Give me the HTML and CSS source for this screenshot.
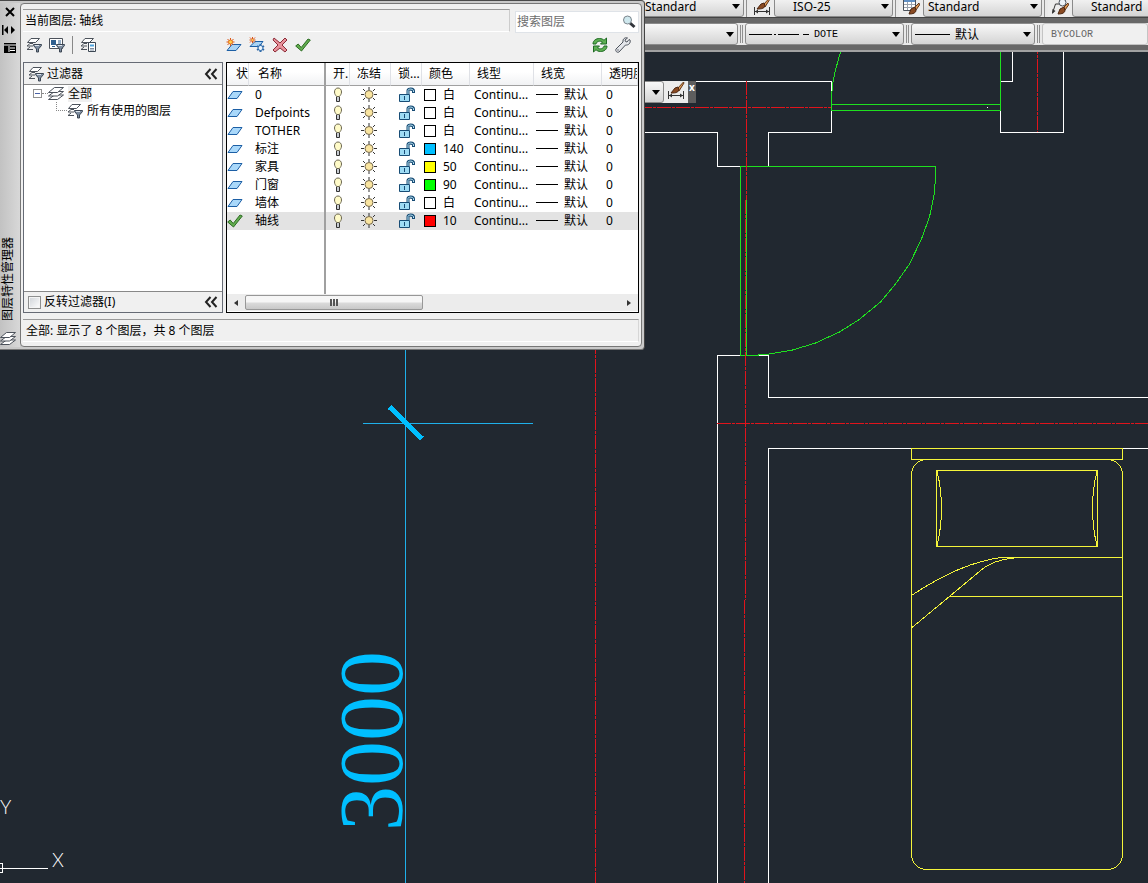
FILE: index.html
```html
<!DOCTYPE html>
<html lang="zh-CN">
<head>
    <meta charset="UTF-8">
    <meta name="viewport" content="width=device-width, initial-scale=1.0">
    <title>图层特性管理器</title>
    <link rel="stylesheet" href="styles.css">
</head>
<body>
    <!-- Icon sprites -->
    <svg class="sprites" aria-hidden="true">
        <symbol id="i-layers" viewBox="0 0 16 16">
            <g fill="#fff" stroke="#4c525b">
                <path d="M.5 13.500h9l6-4.500h-9z"/>
                <path d="M.5 10h9l6-4.500h-9z"/>
                <path d="M.5 6.500h9l6-5h-9z"/>
            </g>
        </symbol>
        <symbol id="i-filter" viewBox="0 0 16 16">
            <path d="M5 1.500h8.500l-4 4H1.500zM1 9l3-2.500h3M1 9h6M1 12.500l3-2.500M1 12.500h6" fill="#fff" stroke="#4c525b"/>
            <path d="M7.500 7.500h8v1l-3 3.500v3h-2v-3l-3-3.500z" fill="#7e8da0" stroke="#3c4653"/>
            <path d="M9 8.500h4" stroke="#dfe6ee"/>
        </symbol>
        <symbol id="i-group" viewBox="0 0 16 16">
            <path d="M.5 1.500h13v10H.5z" fill="#fff" stroke="#4c525b"/>
            <path d="M2 3h5v5H2z" fill="#2f5f8f"/>
            <path d="M9 4h3M9 6h3M3 9.500h3" stroke="#2f5f8f"/>
            <path d="M7.500 7.500h8v1l-3 3.500v3h-2v-3l-3-3.500z" fill="#7e8da0" stroke="#3c4653"/>
            <path d="M9 8.500h4" stroke="#dfe6ee"/>
        </symbol>
        <symbol id="i-states" viewBox="0 0 16 16">
            <path d="M5 1.500h8.500l-4 4H1.500zM1 9l3-2.500h3M1 9h6M1 12.500l3-2.500M1 12.500h6" fill="#fff" stroke="#4c525b"/>
            <path d="M8.500 5.500h7v9h-7z" fill="#fff" stroke="#3c4653"/>
            <path d="M10 7.500h4v2h-4z" fill="#4ea3dc"/>
            <path d="M10 11.500h4M10 13h4" stroke="#7e8da0"/>
        </symbol>
        <symbol id="i-new" viewBox="0 0 16 16">
            <path d="M1 13.500h9l5-6H6z" fill="#a9d4f5" stroke="#1c5fa5"/>
            <path d="M4.500 1v8M.5 5h8M1.500 2l6 6M7.500 2l-6 6" stroke="#d9541a"/>
            <circle cx="4.500" cy="5" r="2" fill="#ffd34d" stroke="#e8761e"/>
        </symbol>
        <symbol id="i-newvp" viewBox="0 0 16 16">
            <path d="M1 9.500h9l4-5H6z" fill="#a9d4f5" stroke="#1c5fa5"/>
            <path d="M3.500 0v6M.5 3h6M1 .5l5 5M6 .5l-5 5" stroke="#d9541a"/>
            <circle cx="3.500" cy="3" r="1" fill="#ffd34d"/>
            <path d="M11.500 7v8M8 9l7 4M15 9l-7 4" stroke="#2b68a8" stroke-width="2"/>
            <circle cx="11.500" cy="11" r="2.500" fill="#eaf4fc" stroke="#2b68a8"/>
        </symbol>
        <symbol id="i-delete" viewBox="0 0 16 16">
            <path d="M2 1l6 5 5-5 2 2-5 5 5 5-2 2-5-4-5 4-2-2 5-5-5-5z" fill="#e8929b" stroke="#8c2a36"/>
        </symbol>
        <symbol id="i-check" viewBox="0 0 16 16">
            <path d="M.7 9l2.500-2 3 3.500L13 2l2.300 1L6.500 14z" fill="#62ad4f" stroke="#2d6c23"/>
        </symbol>
        <symbol id="i-refresh" viewBox="0 0 16 16">
            <path d="M1 7C1 3.500 4 1.500 7.500 1.500c2 0 3.500.7 4.500 1.800L14.500 1v6h-6L10.500 5C8 3.300 4.500 4.300 4 7z" fill="#5db052" stroke="#1f6b24"/>
            <path d="M15 9c0 3.500-3 5.500-6.500 5.500-2 0-3.500-.7-4.500-1.800L1.500 15V9h6L5.500 11c2.500 1.700 6 .7 6.500-2z" fill="#5db052" stroke="#1f6b24"/>
        </symbol>
        <symbol id="i-wrench" viewBox="0 0 16 16">
            <path d="M14 2.500L12 5l-1.500-.5L10 3l2.500-2C10 0 7.500 2 8 5L1 12c-1 2 1 4 3 3l6.500-7c3 .5 5.500-2 4.500-5z" fill="#e4e6ea" stroke="#4c525b"/>
            <circle cx="3" cy="13" r=".7" fill="#4c525b"/>
        </symbol>
        <symbol id="i-search" viewBox="0 0 16 16">
            <path d="M9 9l4.500 4" stroke="#30343a" stroke-width="3"/>
            <circle cx="6.500" cy="6" r="4" fill="#cfe8ee" stroke="#7b858c"/>
        </symbol>
        <symbol id="i-layer" viewBox="0 0 16 16">
            <path d="M1 11.500h9l5-7H6z" fill="#a9d8fa" stroke="#1c5fa5"/>
        </symbol>
        <symbol id="i-bulb" viewBox="0 0 16 16">
            <path d="M6.500 9.500C5.500 8 4.500 7 4.500 5c0-2.500 1.500-4 3.500-4s3.500 1.500 3.500 4c0 2-1 3-2 4.500z" fill="#fffbc8" stroke="#6b6650"/>
            <path d="M6.500 10v4.500h3V10" fill="#c8ccd2" stroke="#333"/>
        </symbol>
        <symbol id="i-sun" viewBox="0 0 16 16">
            <path d="M8 0v3M8 12v3M0 7.500h3M13 7.500h3M2 2l2 2M12 11l2 2M14 2l-2 2M4 11l-2 2" stroke="#333"/>
            <circle cx="8" cy="7.500" r="4" fill="#fae5a0" stroke="#75684c"/>
        </symbol>
        <symbol id="i-lock" viewBox="0 0 16 16">
            <path d="M9 7V3.500C9 1.500 14.500 1.500 14.500 4v2" fill="none" stroke="#174c75" stroke-width="3"/>
            <path d="M9 7V3.500C9 1.500 14.500 1.500 14.500 4v1" fill="none" stroke="#bce6f7"/>
            <path d="M.5 7.500h10v7H.5z" fill="#9edcf5" stroke="#174c75"/>
            <path d="M5.500 9v4" stroke="#174c75"/>
        </symbol>
        <symbol id="i-dimstyle" viewBox="0 0 18 18">
            <path d="M1.500 9v8M16.500 9v8M2 13.500h14" stroke="#333"/>
            <path d="M2 13.500l3-2v4zM16 13.500l-3-2v4z" fill="#333"/>
            <path d="M16.500 0L10 7l2 2 5-8z" fill="#e09a55" stroke="#633617"/>
            <path d="M11 5L8 6 4 11c3 0 7 0 8-3z" fill="#8a4a22" stroke="#4b2611"/>
        </symbol>
        <symbol id="i-tablestyle" viewBox="0 0 18 18">
            <path d="M1.500 1.500h12v11h-12z" fill="#fff" stroke="#4c525b"/>
            <path d="M2 3h11" stroke="#5f8fc4" stroke-width="2"/>
            <path d="M2 6.500h11M2 9.500h11M5.500 4v8M9.500 4v8" stroke="#9aa2ad"/>
            <path d="M17 5l-5 5 2 2 3.500-5z" fill="#e09a55" stroke="#633617"/>
            <path d="M13 9l-4 2-2 5c4 0 7-1 7-4z" fill="#8a4a22" stroke="#4b2611"/>
        </symbol>
        <symbol id="i-leaderstyle" viewBox="0 0 18 18">
            <path d="M1.500 15l3-9H9" fill="none" stroke="#333"/>
            <path d="M1 16l.5-5 3 2z" fill="#333"/>
            <circle cx="11.500" cy="4.500" r="3.500" fill="#eef3f8" stroke="#4c525b"/>
            <path d="M17 5l-5 5 2 2 3.500-5z" fill="#e09a55" stroke="#633617"/>
            <path d="M13 9l-4 2-2 5c4 0 7-1 7-4z" fill="#8a4a22" stroke="#4b2611"/>
        </symbol>
        <symbol id="i-chevrons" viewBox="0 0 14 12">
            <path d="M6.500 1L2 6l4.500 5M12.500 1L8 6l4.500 5" fill="none" stroke="#222" stroke-width="2"/>
        </symbol>
    </svg>

    <main class="workspace">
        <!-- Model space -->
        <svg class="drawing" aria-label="模型空间">
            <g class="wall">
                <path d="M600 81.500H831.500V132.500H768.500V166.500H717.500V132.500H600"/>
                <path d="M1000.500 110V132.500H1063.500V40M1000 81.500H1012.500V40"/>
                <path d="M717.500 2000V355.500H768.500V397.500H4000M768.500 2000V448.500H4000"/>
                <path d="M987 107.500h1"/>
            </g>
            <g class="opening">
                <path d="M1000.500 40V110.500M831.500 98V110.500M831 104.500H1000M831 110.500H1000"/>
                <path d="M740.500 355V166.500H935.500V176L934.500 193 929.500 217 921.500 239 909.500 264 895.500 284 880.500 302 858.500 320 839.500 332 815.500 343 792.500 350 769.500 354 753 355.500H740"/>
                <path d="M746.500 200V355"/>
                <path d="M840.500 52L835.500 70 832.500 84 831.500 98"/>
            </g>
            <g class="axis">
                <path d="M600 107.500H831"/>
                <path d="M746.500 81V200M745.500 200V600M744.500 600V2000"/>
                <path d="M1037.500 40V132M595.500 340V2000M717 423.500H4000"/>
            </g>
            <g class="furniture">
                <path d="M911.500 448.500H1122.500V459.500H911.500z"/>
                <rect x="911.500" y="459.500" width="211" height="410" rx="15"/>
                <path d="M936.500 470.500H1097.500V546.500H936.500z"/>
                <path d="M937 471Q946 508 937 546M1097 471Q1088 508 1097 546"/>
                <path d="M911.500 595.500Q960 563 1001 557.500H1122M911.500 628L980 571Q992 560 1014 558M949 596.500H1122"/>
            </g>
            <g class="dimension">
                <path d="M405.500 340V2000M363 423.500H533"/>
                <path class="tick" d="M389.500 407L422 438.500"/>
                <text class="dimension-text" transform="translate(402 831) rotate(-90)">3000</text>
            </g>
            <g class="ucs">
                <path d="M-1 863.500H2.500V872.500H-1M0 868.500H48"/>
                <text x="52" y="867">X</text>
                <text x="0" y="814">Y</text>
            </g>
        </svg>

        <div class="toolbars">
            <div class="toolbar toolbar-styles">
                <span class="combo combo-text"><select aria-label="文字样式"><option>Standard</option></select></span>
                <span class="grip"></span>
                <button class="style-button" aria-label="标注样式"><svg><use href="#i-dimstyle"/></svg></button>
                <span class="combo combo-style combo-indent"><select aria-label="标注样式列表"><option>ISO-25</option></select></span>
                <span class="grip"></span>
                <button class="style-button" aria-label="表格样式"><svg><use href="#i-tablestyle"/></svg></button>
                <span class="combo combo-style"><select aria-label="表格样式列表"><option>Standard</option></select></span>
                <span class="grip"></span>
                <button class="style-button" aria-label="多重引线样式"><svg><use href="#i-leaderstyle"/></svg></button>
                <span class="combo combo-style combo-indent"><select aria-label="多重引线样式列表"><option>Standard</option></select></span>
            </div>
            <div class="toolbar toolbar-properties">
                <span class="combo combo-color"><select aria-label="颜色"><option>ByLayer</option></select></span>
                <span class="grip"></span>
                <span class="combo combo-linetype"><select aria-label="线型"><option>DOTE</option></select></span>
                <span class="grip"></span>
                <span class="combo combo-weight"><select aria-label="线宽"><option>默认</option></select></span>
                <span class="grip"></span>
                <span class="combo combo-plot"><select aria-label="打印样式" disabled><option>BYCOLOR</option></select></span>
            </div>
        </div>

        <div class="mini-toolbar">
            <span class="combo combo-mini"><select aria-label="标注"><option></option></select></span>
            <button class="style-button" aria-label="标注样式"><svg><use href="#i-dimstyle"/></svg></button>
            <button class="mini-close" aria-label="关闭">x</button>
        </div>

        <!-- Layer properties manager -->
        <section class="palette">
            <div class="palette-strip">
                <button aria-label="关闭"><svg viewBox="0 0 16 16"><path d="M4 4l8 8M12 4l-8 8" stroke="#000" stroke-width="2"/></svg></button>
                <button aria-label="自动隐藏"><svg viewBox="0 0 16 16"><path d="M0 3h1.500v10H0zM6 4v8L2 8zM9 4v8l4-4z"/></svg></button>
                <button aria-label="特性"><svg viewBox="0 0 16 16"><path d="M2 3h12v10H2z"/><path d="M2 5h12M8 8h5M8 10.500h5M7 6v6" stroke="#fff"/></svg></button>
                <h1 class="palette-title">图层特性管理器</h1>
                <svg class="icon"><use href="#i-layers"/></svg>
            </div>

            <div class="palette-body">
                <div class="current-row">
                    <p class="current-layer">当前图层: 轴线</p>
                    <label class="search-box">
                        <input type="text" placeholder="搜索图层" aria-label="搜索图层">
                        <svg class="icon"><use href="#i-search"/></svg>
                    </label>
                </div>

                <div class="actions">
                    <div class="actions-filter">
                        <button aria-label="新建特性过滤器"><svg class="icon"><use href="#i-filter"/></svg></button>
                        <button aria-label="新建组过滤器"><svg class="icon"><use href="#i-group"/></svg></button>
                        <span class="separator"></span>
                        <button aria-label="图层状态管理器"><svg class="icon"><use href="#i-states"/></svg></button>
                    </div>
                    <div class="actions-layer">
                        <button aria-label="新建图层"><svg class="icon"><use href="#i-new"/></svg></button>
                        <button aria-label="在所有视口中都被冻结的新图层"><svg class="icon"><use href="#i-newvp"/></svg></button>
                        <button aria-label="删除图层"><svg class="icon"><use href="#i-delete"/></svg></button>
                        <button aria-label="置为当前"><svg class="icon"><use href="#i-check"/></svg></button>
                    </div>
                    <div class="actions-right">
                        <button aria-label="刷新"><svg class="icon"><use href="#i-refresh"/></svg></button>
                        <button aria-label="设置"><svg class="icon"><use href="#i-wrench"/></svg></button>
                    </div>
                </div>

                <div class="panes">
                    <div class="filters">
                        <div class="filters-header">
                            <svg class="icon"><use href="#i-filter"/></svg>
                            <h2>过滤器</h2>
                            <button class="collapse" aria-label="收拢过滤器"><svg><use href="#i-chevrons"/></svg></button>
                        </div>
                        <ul class="tree">
                            <li class="tree-root"><span class="expander"></span><span class="branch"></span><svg class="icon"><use href="#i-layers"/></svg><span class="tree-label active">全部</span></li>
                            <li class="tree-child"><span class="branch corner"></span><svg class="icon"><use href="#i-filter"/></svg><span class="tree-label">所有使用的图层</span></li>
                        </ul>
                        <div class="filters-footer">
                            <input type="checkbox" id="invert">
                            <label for="invert">反转过滤器(I)</label>
                            <button class="collapse" aria-label="收拢"><svg><use href="#i-chevrons"/></svg></button>
                        </div>
                    </div>

                    <div class="layers">
                        <table class="layer-table">
                            <colgroup>
                                <col class="c-status"><col class="c-name"><col class="c-on"><col class="c-freeze"><col class="c-lock"><col class="c-color"><col class="c-type"><col class="c-weight"><col class="c-alpha">
                            </colgroup>
                            <thead>
                                <tr><th>状</th><th>名称</th><th>开.</th><th>冻结</th><th>锁...</th><th>颜色</th><th>线型</th><th>线宽</th><th>透明度</th></tr>
                            </thead>
                            <tbody>
                                <tr><td><svg class="icon"><use href="#i-layer"/></svg></td><td>0</td><td><svg class="icon"><use href="#i-bulb"/></svg></td><td><svg class="icon"><use href="#i-sun"/></svg></td><td><svg class="icon"><use href="#i-lock"/></svg></td><td><span class="swatch"></span>白</td><td>Continu...</td><td><span class="line"></span>默认</td><td>0</td></tr>
                                <tr><td><svg class="icon"><use href="#i-layer"/></svg></td><td>Defpoints</td><td><svg class="icon"><use href="#i-bulb"/></svg></td><td><svg class="icon"><use href="#i-sun"/></svg></td><td><svg class="icon"><use href="#i-lock"/></svg></td><td><span class="swatch"></span>白</td><td>Continu...</td><td><span class="line"></span>默认</td><td>0</td></tr>
                                <tr><td><svg class="icon"><use href="#i-layer"/></svg></td><td>TOTHER</td><td><svg class="icon"><use href="#i-bulb"/></svg></td><td><svg class="icon"><use href="#i-sun"/></svg></td><td><svg class="icon"><use href="#i-lock"/></svg></td><td><span class="swatch"></span>白</td><td>Continu...</td><td><span class="line"></span>默认</td><td>0</td></tr>
                                <tr><td><svg class="icon"><use href="#i-layer"/></svg></td><td>标注</td><td><svg class="icon"><use href="#i-bulb"/></svg></td><td><svg class="icon"><use href="#i-sun"/></svg></td><td><svg class="icon"><use href="#i-lock"/></svg></td><td><span class="swatch blue"></span>140</td><td>Continu...</td><td><span class="line"></span>默认</td><td>0</td></tr>
                                <tr><td><svg class="icon"><use href="#i-layer"/></svg></td><td>家具</td><td><svg class="icon"><use href="#i-bulb"/></svg></td><td><svg class="icon"><use href="#i-sun"/></svg></td><td><svg class="icon"><use href="#i-lock"/></svg></td><td><span class="swatch yellow"></span>50</td><td>Continu...</td><td><span class="line"></span>默认</td><td>0</td></tr>
                                <tr><td><svg class="icon"><use href="#i-layer"/></svg></td><td>门窗</td><td><svg class="icon"><use href="#i-bulb"/></svg></td><td><svg class="icon"><use href="#i-sun"/></svg></td><td><svg class="icon"><use href="#i-lock"/></svg></td><td><span class="swatch green"></span>90</td><td>Continu...</td><td><span class="line"></span>默认</td><td>0</td></tr>
                                <tr><td><svg class="icon"><use href="#i-layer"/></svg></td><td>墙体</td><td><svg class="icon"><use href="#i-bulb"/></svg></td><td><svg class="icon"><use href="#i-sun"/></svg></td><td><svg class="icon"><use href="#i-lock"/></svg></td><td><span class="swatch"></span>白</td><td>Continu...</td><td><span class="line"></span>默认</td><td>0</td></tr>
                                <tr class="current"><td><svg class="icon"><use href="#i-check"/></svg></td><td>轴线</td><td><svg class="icon"><use href="#i-bulb"/></svg></td><td><svg class="icon"><use href="#i-sun"/></svg></td><td><svg class="icon"><use href="#i-lock"/></svg></td><td><span class="swatch red"></span>10</td><td>Continu...</td><td><span class="line"></span>默认</td><td>0</td></tr>
                                <tr class="filler"><td></td><td></td><td colspan="7"></td></tr>
                            </tbody>
                        </table>
                        <div class="scrollbar">
                            <button class="arrow arrow-left" aria-label="向左滚动"></button>
                            <div class="track"><div class="thumb"></div></div>
                            <button class="arrow arrow-right" aria-label="向右滚动"></button>
                        </div>
                    </div>
                </div>

                <p class="status">全部: 显示了 8 个图层，共 8 个图层</p>
            </div>
        </section>
    </main>
</body>
</html>
```

FILE: styles.css
```css
* {
    margin: 0;
    padding: 0;
    box-sizing: border-box;
}

body {
    font-family: 'Noto Sans', 'Noto Sans CJK SC', sans-serif;
    font-size: 12px;
    line-height: 18px;
    color: #000;
    background: #212830;
}

button {
    display: flex;
    align-items: center;
    justify-content: center;
    border: none;
    background: none;
    font: inherit;
}

h1,
h2 {
    font-size: 12px;
    font-weight: 400;
}

svg {
    display: block;
    flex: none;
}

.sprites {
    position: absolute;
    width: 0;
    height: 0;
}

.icon {
    width: 16px;
    height: 16px;
}

.workspace {
    position: relative;
    min-height: 100vh;
    overflow: hidden;
}

/* Drawing */
.drawing {
    position: absolute;
    inset: 0;
    width: 100%;
    height: 100%;
    fill: none;
    shape-rendering: crispEdges;
}

.wall {
    stroke: #fff;
}

.opening {
    stroke: #1fe01f;
}

.axis {
    stroke: #e0141c;
    stroke-dasharray: 14 1 3 1;
}

.furniture {
    stroke: #f5f53a;
}

.dimension {
    stroke: #1fb0ea;
}

.tick {
    stroke: #00bfff;
    stroke-width: 5;
}

.dimension-text {
    font-family: 'Liberation Serif', serif;
    font-size: 90px;
    fill: #00bfff;
    stroke: none;
}

.ucs {
    stroke: #fff;
}

.ucs text {
    font-family: Lato, sans-serif;
    font-size: 19px;
    font-weight: 300;
    fill: #fff;
    stroke: none;
}

/* Toolbars */
.toolbars {
    position: relative;
    background: #686868;
    border-bottom: 2px solid #a2a2a2;
}

.toolbar {
    display: flex;
    padding-left: 628px;
    background: #e9e9e9;
    overflow: hidden;
}

.toolbar-styles {
    align-items: flex-end;
    height: 18px;
    border-bottom: 1px solid #444;
}

.toolbar-properties {
    align-items: center;
    height: 22px;
    margin: 5px 0;
}

.combo {
    position: relative;
    flex: none;
}

.combo select {
    display: block;
    appearance: none;
    width: 100%;
    height: 22px;
    padding: 0 16px 0 4px;
    border: 1px solid #8a8a8a;
    border-radius: 3px;
    background: linear-gradient(#f8f8f8, #d4d4d4);
    font-family: inherit;
    font-size: 12px;
    color: #000;
}

.combo::after {
    content: '';
    position: absolute;
    top: 9px;
    right: 4px;
    border: 4px solid transparent;
    border-top: 5px solid #000;
    border-bottom: none;
}

.combo-text {
    width: 116px;
}

.combo-text select {
    padding-left: 16px;
}

.combo-style {
    width: 119px;
}

.combo-indent select {
    padding-left: 18px;
}

.combo-color {
    width: 110px;
}

.combo-color select {
    color: transparent;
}

.combo-linetype {
    width: 159px;
}

.combo-weight {
    width: 124px;
}

.combo-linetype::before,
.combo-weight::before {
    content: '';
    position: absolute;
    top: 11px;
    left: 4px;
    width: 35px;
    height: 1px;
    background: #000;
}

.combo-linetype::before {
    width: 60px;
    background: linear-gradient(90deg, #000 0 23px, transparent 23px 25px, #000 25px 27px, transparent 27px 29px, #000 29px 50px, transparent 50px 54px, #000 54px);
}

.combo-linetype select {
    padding-left: 68px;
    font-family: 'Liberation Mono', monospace;
    font-size: 10px;
}

.combo-weight select {
    padding-left: 43px;
}

.combo-plot {
    flex: 1;
}

.combo-plot::after {
    display: none;
}

.combo-plot select {
    padding-left: 8px;
    border-color: #c4c4c4;
    background: #f0f0f0;
    font-family: 'Liberation Mono', monospace;
    font-size: 10px;
    color: #666;
    opacity: 1;
}

.grip {
    flex: none;
    width: 3px;
    height: 18px;
    margin: 0 2px;
    border: 1px solid #909090;
    border-top: none;
    border-bottom: none;
}

.toolbar-styles .grip {
    width: 2px;
    border-right: none;
}

.style-button {
    flex: none;
    width: 24px;
    height: 20px;
    background: #ececec;
}

.style-button svg {
    width: 18px;
    height: 18px;
}

.mini-toolbar {
    position: absolute;
    top: 81px;
    left: 627px;
    display: flex;
    height: 22px;
    background: #ececec;
}

.combo-mini {
    width: 37px;
}

.mini-close {
    align-items: flex-start;
    width: 8px;
    background: #5e5e5e;
    color: #fff;
    font-size: 10px;
    font-weight: 700;
    line-height: 12px;
}

/* Palette */
.palette {
    position: absolute;
    top: 0;
    left: 0;
    display: flex;
    width: 645px;
    padding: 2px 2px 2px 0;
    border-top: 1px solid #4a4a4a;
    border-right: 1px solid #444;
    border-bottom: 1px solid #777;
    border-radius: 0 4px 4px 0;
    background: #c9c9c9;
}

.palette-strip {
    display: flex;
    flex-direction: column;
    width: 20px;
    background: linear-gradient(90deg, #c2c2c2, #d8d8d8);
}

.palette-strip button {
    width: 20px;
    height: 18px;
}

.palette-strip button svg {
    width: 16px;
    height: 16px;
}

.palette-title {
    margin-top: auto;
    margin-bottom: 10px;
    line-height: 16px;
    writing-mode: vertical-rl;
    text-orientation: sideways;
    transform: rotate(180deg);
}

.palette-body {
    flex: 1;
    min-width: 0;
    padding: 5px 2px 4px;
    border: 1px solid #777;
    border-radius: 4px;
    background: #f0f0f0;
}

.current-row {
    display: flex;
    gap: 5px;
}

.current-layer {
    flex: 1;
    height: 23px;
    padding: 2px;
    border-top: 1px solid #999;
    border-right: 1px solid #ccc;
    border-bottom: 1px solid #fff;
}

.search-box {
    display: flex;
    align-items: center;
    width: 124px;
    height: 22px;
    margin-top: 2px;
    padding: 0 1px;
    border: 1px solid #dfe3e8;
    background: #fff;
}

.search-box input {
    flex: 1;
    min-width: 0;
    border: none;
    background: none;
    font: inherit;
}

.search-box input::placeholder {
    color: #6d6d6d;
}

.actions {
    display: flex;
    align-items: center;
    height: 29px;
    padding: 0 8px 5px 3px;
}

.actions-filter,
.actions-layer,
.actions-right {
    display: flex;
    align-items: center;
    gap: 7px;
}

.actions-filter {
    width: 200px;
}

.actions-right {
    margin-left: auto;
}

.separator {
    width: 1px;
    height: 18px;
    background: #888;
}

.panes {
    display: flex;
    gap: 3px;
    height: 251px;
}

.filters {
    display: flex;
    flex-direction: column;
    width: 200px;
    border: 1px solid #666b75;
}

.filters-header,
.filters-footer {
    display: flex;
    align-items: center;
    gap: 3px;
    height: 22px;
    padding: 0 4px;
    border-bottom: 1px solid #888;
}

.filters-footer {
    height: 21px;
    border-top: 1px solid #888;
    border-bottom: none;
}

.filters-footer input {
    appearance: none;
    width: 13px;
    height: 13px;
    border: 1px solid #8e8f8f;
    background: linear-gradient(135deg, #cfd3d8, #fff);
    box-shadow: inset 0 0 0 1px #f4f4f4;
}

.collapse {
    width: 14px;
    height: 14px;
    margin-left: auto;
}

.collapse svg {
    width: 14px;
    height: 12px;
}

.tree {
    flex: 1;
    background: #fff;
    list-style: none;
}

.tree li {
    display: flex;
    align-items: center;
    height: 17px;
}

.tree-root {
    padding-left: 9px;
}

.tree-child {
    padding-left: 32px;
}

.tree-label {
    margin-left: 4px;
    line-height: 16px;
}

.tree-label.active {
    background: #f0f0f0;
}

.expander {
    width: 9px;
    height: 9px;
    border: 1px solid #919191;
    background: linear-gradient(#4b63a7, #4b63a7) center / 5px 1px no-repeat;
}

.branch {
    width: 6px;
    height: 1px;
    border-top: 1px dotted #888;
}

.corner {
    align-self: flex-start;
    width: 11px;
    height: 9px;
    border-top: none;
    border-bottom: 1px dotted #888;
    border-left: 1px dotted #888;
}

/* Layer list */
.layers {
    flex: 1;
    min-width: 0;
    border: 1px solid #000;
    background: #fff;
    overflow: hidden;
}

.layer-table {
    width: 411px;
    table-layout: fixed;
    border-collapse: separate;
    border-spacing: 0;
}

.c-status { width: 22px; }
.c-name { width: 77px; }
.c-on { width: 24px; }
.c-freeze { width: 41px; }
.c-lock { width: 31px; }
.c-color { width: 48px; }
.c-type { width: 64px; }
.c-weight { width: 68px; }
.c-alpha { width: 36px; }

.layer-table th {
    height: 23px;
    padding-left: 7px;
    border-right: 1px solid #dfe1e6;
    border-bottom: 1px solid #a0a0a0;
    background: linear-gradient(#fff 40%, #f1f2f4);
    font-weight: 400;
    text-align: left;
    white-space: nowrap;
    overflow: hidden;
}

.layer-table th:nth-child(-n + 2) {
    padding-left: 9px;
}

.layer-table td {
    height: 18px;
    padding-left: 4px;
    line-height: 16px;
    white-space: nowrap;
    overflow: hidden;
}

.layer-table td:first-child {
    padding-left: 0;
}

.layer-table td:nth-child(2) {
    padding-left: 6px;
}

.layer-table th:nth-child(2),
.layer-table td:nth-child(2) {
    border-right: 2px solid #a0a0a0;
}

.layer-table td:nth-child(n + 6) {
    padding-left: 2px;
}

.layer-table td:nth-child(7),
.layer-table td:nth-child(9) {
    padding-left: 4px;
}

.layer-table td:nth-child(4) {
    padding-left: 11px;
}

.layer-table td:nth-child(5) {
    padding-left: 8px;
}

.current td {
    background: #e3e3e3;
}

.layer-table .filler td {
    height: 64px;
}

.swatch {
    display: inline-block;
    width: 12px;
    height: 12px;
    margin-right: 7px;
    border: 1px solid #000;
    background: #fff;
    vertical-align: -2px;
}

.blue { background: #00bfff; }
.yellow { background: #ff0; }
.green { background: #0f0; }
.red { background: #f00; }

.line {
    display: inline-block;
    width: 22px;
    height: 1px;
    margin-right: 6px;
    background: #000;
    vertical-align: 4px;
}

.scrollbar {
    display: flex;
    height: 17px;
    background: #ececec;
}

.arrow {
    width: 18px;
}

.arrow::before {
    content: '';
    border: 3px solid transparent;
}

.arrow-left::before {
    border-right: 4px solid #333;
    border-left: none;
}

.arrow-right::before {
    border-left: 4px solid #333;
    border-right: none;
}

.track {
    flex: 1;
}

.thumb {
    display: flex;
    align-items: center;
    justify-content: center;
    width: 178px;
    height: 15px;
    margin-top: 1px;
    border: 1px solid #979797;
    border-radius: 2px;
    background: linear-gradient(#f6f6f6 0 45%, #dadada 55%, #c8c8c8);
}

.thumb::before {
    content: '';
    width: 8px;
    height: 7px;
    background: repeating-linear-gradient(90deg, #555 0 2px, transparent 2px 3px);
}

.status {
    height: 23px;
    margin-top: 6px;
    padding: 2px 3px;
    border-top: 1px solid #999;
    border-right: 1px solid #d6d6d6;
    border-bottom: 1px solid #fff;
}
```
